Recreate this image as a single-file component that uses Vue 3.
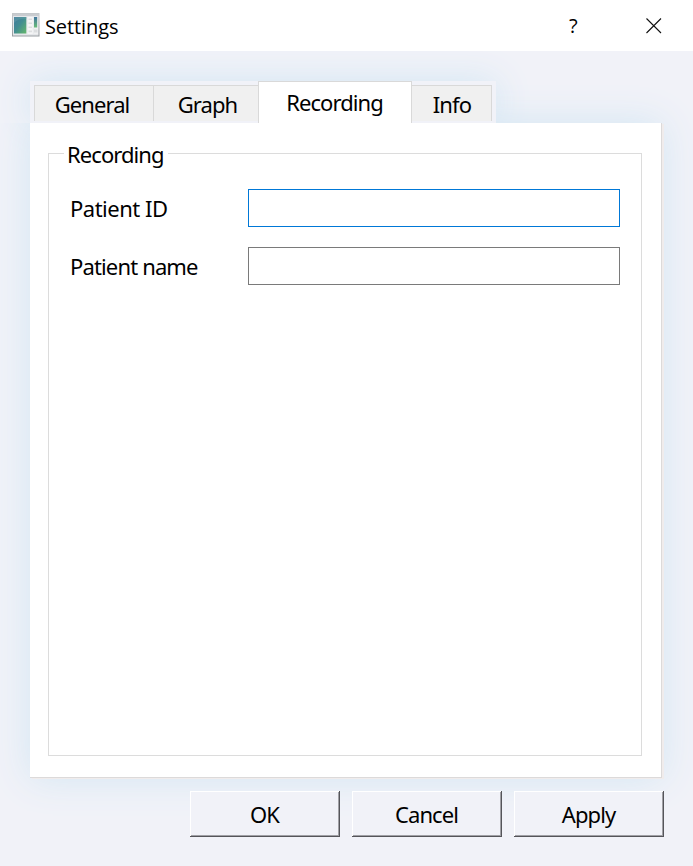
<script setup>
import { ref } from 'vue'

const active = ref('recording')
const tabs = [
  { id: 'general', label: 'General' },
  { id: 'graph', label: 'Graph' },
  { id: 'recording', label: 'Recording' },
  { id: 'info', label: 'Info' },
]
const patientId = ref('')
const patientName = ref('')
</script>

<template>
  <div class="dialog">
    <header class="titlebar">
      <svg class="app-icon" width="28" height="24" viewBox="0 0 28 24">
        <defs>
          <linearGradient id="screen" x1="0" y1="0" x2="1" y2="1">
            <stop offset="0" stop-color="#3f789f" />
            <stop offset=".48" stop-color="#438e91" />
            <stop offset="1" stop-color="#65b86a" />
          </linearGradient>
          <linearGradient id="strip" x1="0" y1="0" x2="0" y2="1">
            <stop offset="0" stop-color="#41759d" />
            <stop offset="1" stop-color="#69bd78" />
          </linearGradient>
          <linearGradient id="frame" x1="0" y1="0" x2="0" y2="1">
            <stop offset="0" stop-color="#c4c8cb" />
            <stop offset="1" stop-color="#989da1" />
          </linearGradient>
        </defs>
        <rect x=".5" y=".5" width="26.5" height="22.5" fill="#e5e7ea" stroke="url(#frame)" />
        <path d="M1 2h26" stroke="#c9ccd0" stroke-width="2" />
        <rect x="2" y="4" width="12.3" height="16.5" fill="url(#screen)" />
        <path d="M2 10Q7 5 14.3 6V4H2z" fill="#6fa6aa" opacity=".4" />
        <rect x="15.5" y="4" width="5.3" height="17" fill="#f6f6f7" />
        <path d="M16.5 6.2h3.5M16.5 10.2h3.5M16.5 14.2h3.5M16.5 18.4h3.5" stroke="#dcdee0" stroke-width="1.6" />
        <rect x="21.5" y="4" width="4.5" height="17" fill="#f0f1f2" />
        <rect x="22" y="4" width="3.2" height="10.5" fill="url(#strip)" />
        <path d="M22 18h3.5" stroke="#dcdee0" stroke-width="3" />
      </svg>
      <span class="title">Settings</span>
      <span class="help">?</span>
      <svg class="close" width="16" height="16" viewBox="0 0 16 16">
        <path d="M.5 .5l14.5 14.5M15 .5L.5 15" stroke="#111" stroke-width="1.1" />
      </svg>
    </header>

    <main class="content">
      <nav class="tabs">
        <div
          v-for="t in tabs"
          :key="t.id"
          class="tab"
          :class="[t.id, { active: active === t.id }]"
          @click="active = t.id"
        >
          <span>{{ t.label }}</span>
        </div>
      </nav>
      <section class="panel">
        <div class="group">
          <div class="legend"><span>Recording</span></div>
          <label class="row">
            <span class="t-id">Patient ID</span>
            <input v-model="patientId" class="field focused" />
          </label>
          <label class="row">
            <span>Patient name</span>
            <input v-model="patientName" class="field" />
          </label>
        </div>
      </section>
    </main>

    <footer class="actions">
      <button class="ok"><span>OK</span></button>
      <button class="cancel"><span>Cancel</span></button>
      <button class="apply"><span>Apply</span></button>
    </footer>
  </div>
</template>

<style>
body {
  margin: 0;
  background: #f1f2f8;
}
</style>

<style scoped>
.dialog {
  width: 693px;
  height: 866px;
  box-sizing: border-box;
  overflow: hidden;
  background: #f1f2f8;
  color: #000;
  font: 22px/30px "Noto Sans", sans-serif;
  letter-spacing: -0.92px;
}
.titlebar {
  position: relative;
  z-index: 1;
  display: flex;
  align-items: center;
  height: 51px;
  box-sizing: border-box;
  padding: 0 31px 0 12px;
  background: #fff;
}
.app-icon {
  margin-top: -1px;
}
.title {
  margin-left: 5px;
  margin-top: 2px;
  font-family: "Open Sans", sans-serif;
  font-size: 20px;
  letter-spacing: -0.1px;
}
.help {
  margin-left: auto;
  width: 10px;
  font-family: "Open Sans", sans-serif;
  font-size: 20px;
}
.close {
  margin-left: 67px;
}
.content {
  margin: 30px 0 0 30px;
}
.tabs {
  display: flex;
  align-items: flex-start;
  width: 466px;
  height: 42px;
  box-sizing: border-box;
  padding-left: 4px;
  background: #f1f2f8;
  box-shadow: 0 0 36px #d2e6f3;
}
.tab {
  box-sizing: border-box;
  height: 36px;
  margin-top: 4px;
  border-top: 1px solid #d9d9d9;
  border-left: 1px solid #d9d9d9;
  background: #f0f0f0;
  text-align: center;
  line-height: 36px;
  white-space: nowrap;
}
.general {
  width: 119px;
  padding-right: 4px;
  letter-spacing: -0.92px;
}
.graph {
  width: 105px;
  padding-left: 3px;
}
.recording {
  width: 154px;
}
.info {
  width: 80px;
  padding-left: 1px;
  border-left: 0;
  border-right: 1px solid #d9d9d9;
  letter-spacing: -0.8px;
}
.tab.active {
  position: relative;
  z-index: 2;
  height: 42px;
  margin-top: 0;
  padding-right: 1px;
  border-right: 1px solid #d9d9d9;
  background: #fff;
  line-height: 41px;
}
.panel {
  position: relative;
  z-index: 1;
  width: 632px;
  height: 655px;
  box-sizing: border-box;
  padding: 30px 19px 21px 18px;
  border-right: 1px solid #dcdada;
  border-bottom: 1px solid #dcdada;
  background: #fff;
  box-shadow: 2px 1px 0 #f0ecec, 0 0 36px #d2e6f3;
  clip-path: polygon(-60px 0, 466px 0, 466px -60px, 720px -60px, 720px 720px, -60px 720px);
}
.group {
  width: 594px;
  height: 603px;
  box-sizing: border-box;
  border: 1px solid #dcdcdc;
}
.legend {
  width: 104px;
  height: 30px;
  margin: -15px 0 20px 15px;
  padding-left: 3px;
  box-sizing: border-box;
  background: #fff;
  white-space: nowrap;
}
.row {
  display: flex;
  align-items: center;
  height: 38px;
  margin: 0 21px 20px;
}
.row span {
  width: 178px;
  letter-spacing: -0.85px;
}
.row .t-id {
  letter-spacing: -0.5px;
}
.field {
  box-sizing: border-box;
  width: 372px;
  height: 38px;
  padding: 0 6px;
  border: 1px solid #7a7a7a;
  border-radius: 0;
  outline: 0;
  background: #fff;
  font: inherit;
}
.field.focused {
  border-color: #0078d7;
}
.actions {
  position: relative;
  z-index: 2;
  display: flex;
  justify-content: flex-end;
  gap: 12px;
  padding: 13px 29px 0 0;
}
button {
  width: 150px;
  height: 46px;
  padding: 0 1px 0 0;
  border: 0;
  background: #f1f2f8;
  box-shadow: inset -1px -1px #55555a, inset 1px 1px #fff, inset -2px -2px #a0a0a5;
  color: inherit;
  font: inherit;
  letter-spacing: inherit;
}
</style>
